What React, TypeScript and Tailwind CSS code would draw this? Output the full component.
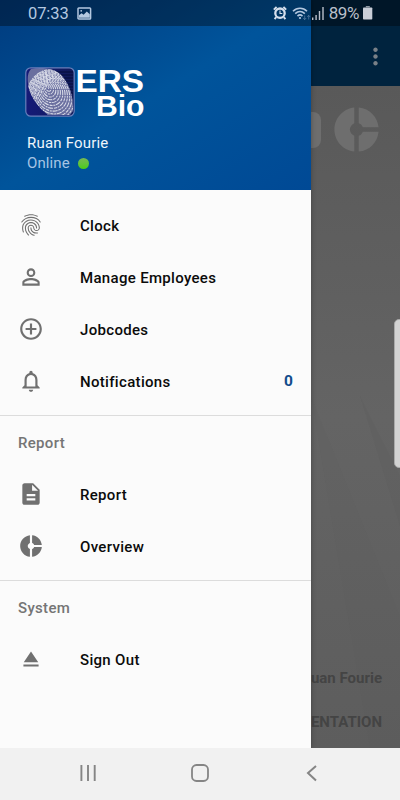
import type { ReactNode } from 'react';
import type { IconType } from 'react-icons';
import {
  MdControlPoint,
  MdDescription,
  MdDonutSmall,
  MdEject,
  MdFingerprint,
  MdMoreVert,
  MdNotificationsNone,
  MdPersonOutline,
} from 'react-icons/md';

interface MenuItem {
  label: string;
  icon: IconType;
  badge?: number;
}

const mainItems: MenuItem[] = [
  { label: 'Clock', icon: MdFingerprint },
  { label: 'Manage Employees', icon: MdPersonOutline },
  { label: 'Jobcodes', icon: MdControlPoint },
  { label: 'Notifications', icon: MdNotificationsNone, badge: 0 },
];

const reportItems: MenuItem[] = [
  { label: 'Report', icon: MdDescription },
  { label: 'Overview', icon: MdDonutSmall },
];

const systemItems: MenuItem[] = [{ label: 'Sign Out', icon: MdEject }];

function StatusBar() {
  return (
    <div className="absolute inset-x-0 top-0 z-20 flex h-[26px] items-center bg-black/35 pl-7 text-[#b4c8e0]">
      <span className="mt-[2px] text-[16.5px] tracking-[-0.1px]">07:33</span>
      <svg className="ml-[8px]" width="15" height="13" viewBox="0 0 15 13">
        <rect x="1" y="1" width="12.6" height="11" rx="0.8" fill="none" stroke="currentColor" strokeWidth="1.5" />
        <path d="M2 10.5V8.2l2.6-2 2 1.6 3.2-3.4 3 2.8v3.6H2z" fill="currentColor" />
        <circle cx="4.2" cy="3.8" r="0.9" fill="currentColor" />
      </svg>
      <div className="ml-auto flex items-center pr-[27px]">
        <svg className="mr-[2px]" width="14" height="14" viewBox="0 0 14 14" fill="none" stroke="#d5dfec">
          <circle cx="7" cy="7.2" r="4.7" strokeWidth="2.3" />
          <path d="M0.8 3.6L3.6 1M13.2 3.6L10.4 1M3.2 11.2l-1.6 2M10.8 11.2l1.6 2" strokeWidth="1.9" />
          <path d="M7 4.5v3h2.3" strokeWidth="1.1" />
        </svg>
        <svg className="ml-[3px]" width="19" height="15" viewBox="0 0 19 15" fill="none" stroke="currentColor" strokeWidth="1.6">
          <path d="M1 5.2C5 1.2 11 1.2 15 5.2M3.2 7.7c2.9-2.8 6.7-2.8 9.6 0M5.5 10.1c1.5-1.4 3.5-1.4 5 0" />
          <circle cx="8" cy="12" r="1.1" fill="currentColor" stroke="none" />
          <path d="M12.7 9.5v4M11.2 12l1.5 1.6 1.5-1.6M16.7 13.5v-4M15.2 11l1.5-1.6 1.5 1.6" strokeWidth="0.8" opacity="0.45" />
        </svg>
        <svg className="ml-px" width="13" height="13" viewBox="0 0 13 13" fill="#b9bfca">
          <path d="M0 10.5h1.4V13H0zM3.4 8h1.4v5H3.4zM6.8 4h1.4v9H6.8zM10.3 0h1.4v13h-1.4z" />
        </svg>
        <span className="mt-px ml-[4px] text-[17px] tracking-[-0.4px] text-[#b9bfca]">89%</span>
        <svg className="ml-[4px]" width="10" height="14" viewBox="0 0 10 14" fill="#c9ced8">
          <path d="M2.8 0h4v1.3h-4z" opacity="0.7" />
          <rect y="1.4" width="9.3" height="12.1" rx="0.8" />
        </svg>
      </div>
    </div>
  );
}

function FingerprintMark() {
  return (
    <svg width="50" height="50" viewBox="0 0 50 50">
      <defs>
        <linearGradient id="markFill" x1="0" y1="0" x2="1" y2="0">
          <stop offset="0" stopColor="#151a78" />
          <stop offset="1" stopColor="#101b58" />
        </linearGradient>
        <clipPath id="printShape">
          <path d="M6 2C16 0 30 1 37 9c8 9 12 23 11 35l-3 4H23C14 41 7 32 4 22 2 13 2 6 6 2z" />
        </clipPath>
      </defs>
      <rect x="0.8" y="0.8" width="48.4" height="48.4" rx="5" fill="url(#markFill)" />
      <path
        d="M29 5h19M32 8h16M35 11h13M38 14h10M40 17h8M42 20h6M43 23h5M44 26h4"
        stroke="#050c39"
        strokeWidth="1.1"
      />
      <g clipPath="url(#printShape)">
        <rect width="50" height="50" fill="#6a6f9f" />
        <g fill="none" stroke="#d9dce8" strokeWidth="1.05" strokeDasharray="3 0.9 5 0.7 2 0.8" transform="rotate(-28 25 24)">
          <ellipse cx="25" cy="19" rx="1" ry="2" />
          <ellipse cx="25" cy="20" rx="2.8" ry="4" />
          <ellipse cx="25" cy="21" rx="4.6" ry="6" />
          <ellipse cx="25" cy="22" rx="6.4" ry="8" />
          <ellipse cx="25" cy="23" rx="8.2" ry="10" />
          <ellipse cx="25" cy="24" rx="10" ry="12" />
          <ellipse cx="25" cy="25" rx="11.8" ry="14" />
          <ellipse cx="25" cy="26" rx="13.6" ry="16" />
          <ellipse cx="25" cy="27" rx="15.4" ry="18" />
          <ellipse cx="25" cy="28" rx="17.2" ry="20" />
          <ellipse cx="25" cy="29" rx="19" ry="22" />
          <ellipse cx="25" cy="30" rx="20.8" ry="24" />
          <ellipse cx="25" cy="31" rx="22.6" ry="26" />
          <ellipse cx="25" cy="32" rx="24.4" ry="28" />
          <ellipse cx="25" cy="33" rx="26.2" ry="30" />
        </g>
      </g>
      <rect x="0.8" y="0.8" width="48.4" height="48.4" rx="5" fill="none" stroke="#687fbb" strokeWidth="1.2" />
    </svg>
  );
}

function DrawerHeader() {
  return (
    <div className="h-[190px] bg-linear-to-br from-[#003b7e] via-[#00549b] to-[#004995] pt-[67px]">
      <div className="flex pl-[25px]">
        <FingerprintMark />
        <svg
          className="ml-[1px] overflow-visible font-['Liberation_Sans',sans-serif] font-bold"
          width="72"
          height="50"
          viewBox="0 0 72 50"
          fill="#fff"
        >
          <text x="-0.5" y="24.5" fontSize="32" textLength="68.5" lengthAdjust="spacingAndGlyphs">ERS</text>
          <text x="20" y="48.6" fontSize="29.5" textLength="48.5" lengthAdjust="spacingAndGlyphs">Bio</text>
        </svg>
      </div>
      <div className="pt-[16px] pl-[27px]">
        <p className="text-[15px] leading-5 tracking-[0.2px] text-[#eef5fb]">Ruan Fourie</p>
        <div className="flex items-center gap-[8px]">
          <span className="text-[15px] leading-[21px] tracking-[0.1px] text-[#a5c4e4]">Online</span>
          <span className="size-[11px] rounded-full bg-linear-to-b from-[#76b951] to-[#47cc0d]" />
        </div>
      </div>
    </div>
  );
}

function MenuRow({ label, icon: Icon, badge }: MenuItem) {
  return (
    <div className="flex h-[52px] items-center pr-[18px] pl-[18px] font-medium text-[#0b0b0b]">
      <Icon className="size-[26px] text-[#707070]" />
      <span className="mt-[2px] ml-9 text-[15px] tracking-[0.32px]">{label}</span>
      {badge !== undefined && <span className="mt-px ml-auto text-[15.5px] font-bold text-[#124c8b]">{badge}</span>}
    </div>
  );
}

function Section({ title, items }: { title?: string; items: MenuItem[] }) {
  return (
    <div className="pb-2">
      {title && <div className="flex h-[52px] items-center pt-[2px] pl-[18px] text-[15px] font-medium tracking-[0.32px] text-[#757575]">{title}</div>}
      {items.map(item => (
        <MenuRow key={item.label} {...item} />
      ))}
    </div>
  );
}

function Drawer({ children }: { children: ReactNode }) {
  return <div className="absolute inset-y-0 left-0 z-10 w-[311px] bg-[#fbfbfb] shadow-[0_0_5px_rgba(0,0,0,0.3)]">{children}</div>;
}

// Dashboard behind the drawer, already dimmed
function Dashboard() {
  return (
    <div className="flex h-full flex-col bg-[#5f5f5f]">
      <div className="flex h-[86px] items-center justify-end bg-[#00233e] pt-[26px] pr-[11px]">
        <MdMoreVert className="size-[27px] text-[#798087]" />
      </div>
      <div className="relative flex-1 overflow-hidden bg-linear-to-b from-[#595959] via-[#646464] to-[#5d5d5d]">
        <svg className="absolute inset-0" width="400" height="662" viewBox="0 0 400 662">
          <path d="M311 310L400 530V662H370z" fill="#595959" opacity="0.12" />
          <path d="M360 310L400 390V440z" fill="#555" opacity="0.12" />
        </svg>
        <div className="relative flex items-center justify-end pt-[17px] pr-[17px]">
          <div className="mr-[9px] h-[36px] w-[40px] rounded-[8px] bg-[#6e6e6e]" />
          <MdDonutSmall className="size-[53px] text-[#6e6e6e]" />
        </div>
      </div>
      <div className="-mt-[80px] flex h-[80px] flex-col items-end pr-[18px] text-[15px] font-bold text-[#444]">
        <span className="relative leading-5">Ruan Fourie</span>
        <span className="relative mt-[24px] text-[15px] leading-5">DOCUMENTATION</span>
      </div>
    </div>
  );
}

function NavigationBar() {
  return (
    <div className="flex h-[52px] items-center justify-between bg-[#f1f1f1] pr-[82px] pb-[2px] pl-[79px]">
      <svg width="18" height="18" viewBox="0 0 18 18" stroke="#858585" strokeWidth="1.9">
        <path d="M2.4 1v16M9 1v16M15.7 1v16" />
      </svg>
      <svg className="mr-[3px]" width="18" height="18" viewBox="0 0 18 18" fill="none" stroke="#858585" strokeWidth="1.8">
        <rect x="1" y="1" width="16" height="16" rx="4.5" />
      </svg>
      <svg width="12" height="18" viewBox="0 0 12 18" fill="none" stroke="#858585" strokeWidth="2">
        <path d="M10 2L2 9l8 7.5" />
      </svg>
    </div>
  );
}

export default function App() {
  return (
    <div className="flex h-[800px] w-[400px] flex-col overflow-hidden font-[Roboto,sans-serif]">
      <div className="relative h-[748px] overflow-hidden">
        <Dashboard />
        <Drawer>
          <DrawerHeader />
          <div className="divide-y divide-[#dcdcdc] pt-[9px]">
            <Section items={mainItems} />
            <Section title="Report" items={reportItems} />
            <Section title="System" items={systemItems} />
          </div>
        </Drawer>
        <StatusBar />
        {/* edge panel handle */}
        <div className="absolute top-[319px] -right-[5px] z-20 h-[149px] w-[11px] rounded-[5px] border border-[#aaa] bg-[#d3d3d3]" />
      </div>
      <NavigationBar />
    </div>
  );
}
